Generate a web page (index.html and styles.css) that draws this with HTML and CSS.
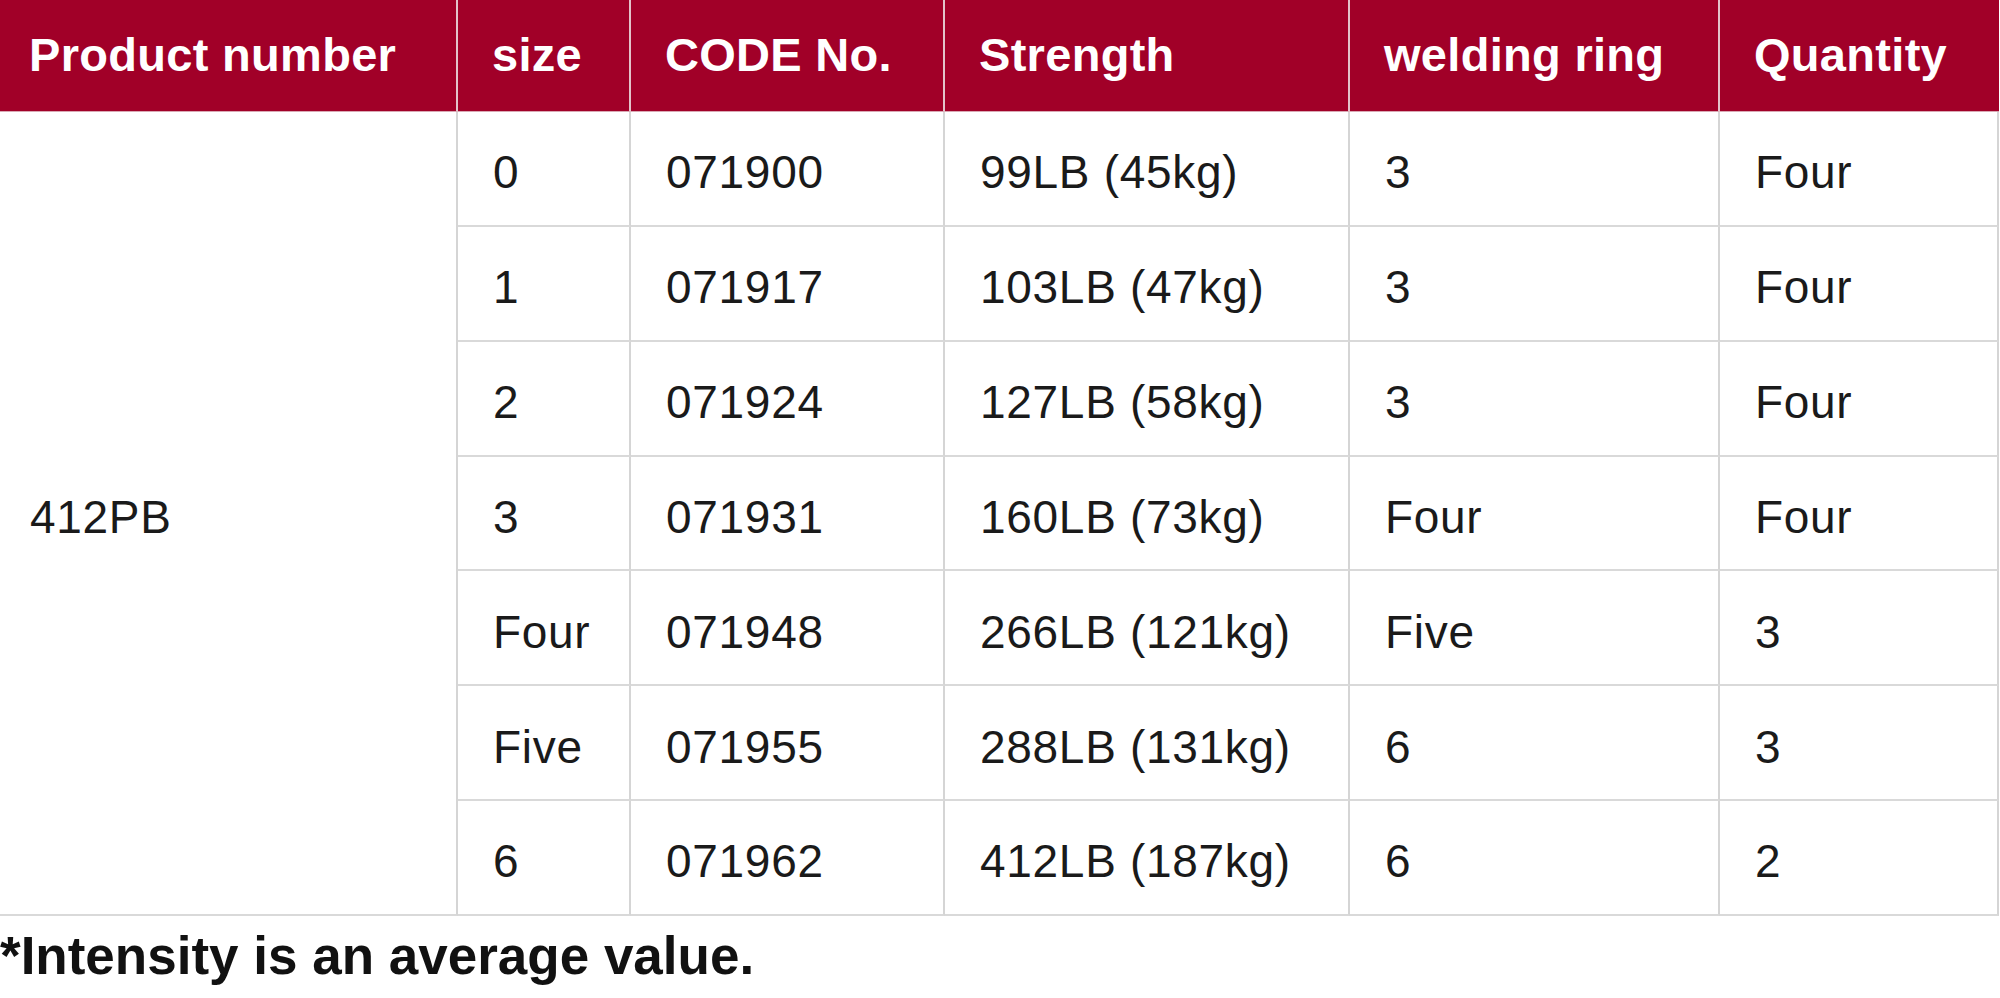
FILE: index.html
```html
<!DOCTYPE html>
<html lang="en">
<head>
<meta charset="utf-8">
<title>412PB</title>
<link rel="stylesheet" href="styles.css">
</head>
<body>
<div class="page">
  <table class="spec">
    <colgroup>
      <col class="c-prod">
      <col class="c-size">
      <col class="c-code">
      <col class="c-str">
      <col class="c-ring">
      <col class="c-qty">
    </colgroup>
    <thead>
      <tr class="head-row">
        <th class="first">Product number</th>
        <th>size</th>
        <th>CODE No.</th>
        <th>Strength</th>
        <th>welding ring</th>
        <th class="last">Quantity</th>
      </tr>
    </thead>
    <tbody>
      <tr>
        <td class="first prod" rowspan="7">412PB</td>
        <td>0</td><td>071900</td><td>99LB (45kg)</td><td>3</td><td class="last">Four</td>
      </tr>
      <tr><td>1</td><td>071917</td><td>103LB (47kg)</td><td>3</td><td class="last">Four</td></tr>
      <tr><td>2</td><td>071924</td><td>127LB (58kg)</td><td>3</td><td class="last">Four</td></tr>
      <tr><td>3</td><td>071931</td><td>160LB (73kg)</td><td>Four</td><td class="last">Four</td></tr>
      <tr><td>Four</td><td>071948</td><td>266LB (121kg)</td><td>Five</td><td class="last">3</td></tr>
      <tr><td>Five</td><td>071955</td><td>288LB (131kg)</td><td>6</td><td class="last">3</td></tr>
      <tr><td>6</td><td>071962</td><td>412LB (187kg)</td><td>6</td><td class="last">2</td></tr>
    </tbody>
  </table>
  <p class="note">*Intensity is an average value.</p>
</div>
</body>
</html>
```

FILE: styles.css
```css
html, body {
  margin: 0;
  padding: 0;
  background: #ffffff;
}

body {
  font-family: "Liberation Sans", Arial, sans-serif;
  color: #1a1a1a;
}

.page {
  width: 2000px;
}

.spec {
  width: 1999px;
  table-layout: fixed;
  border-collapse: separate;
  border-spacing: 0;
}

.c-prod { width: 458px; }
.c-size { width: 173px; }
.c-code { width: 314px; }
.c-str  { width: 405px; }
.c-ring { width: 370px; }
.c-qty  { width: 279px; }

.head-row th {
  height: 112px;
  box-sizing: border-box;
  background: #a10028;
  color: #ffffff;
  font-weight: 700;
  font-size: 47px;
  letter-spacing: 0.3px;
  text-align: left;
  padding: 0 0 2px 34px;
  border-right: 2px solid #e3c3ca;
  border-bottom: 1px solid #d9a9b4;
  white-space: nowrap;
}

.head-row th.first {
  padding-left: 29px;
}

.head-row th.last {
  border-right: none;
}

.spec td {
  height: 114.85px;
  box-sizing: border-box;
  font-size: 46px;
  font-weight: 400;
  letter-spacing: 0.7px;
  padding: 8px 0 0 35px;
  border-right: 2px solid #d5d5d5;
  border-bottom: 2px solid #d9d9d9;
  white-space: nowrap;
  vertical-align: middle;
}

.spec td.prod {
  padding-left: 30px;
}

.note {
  margin: 10px 0 0 0;
  font-size: 53px;
  font-weight: 700;
  line-height: 60px;
  color: #111111;
}
```
